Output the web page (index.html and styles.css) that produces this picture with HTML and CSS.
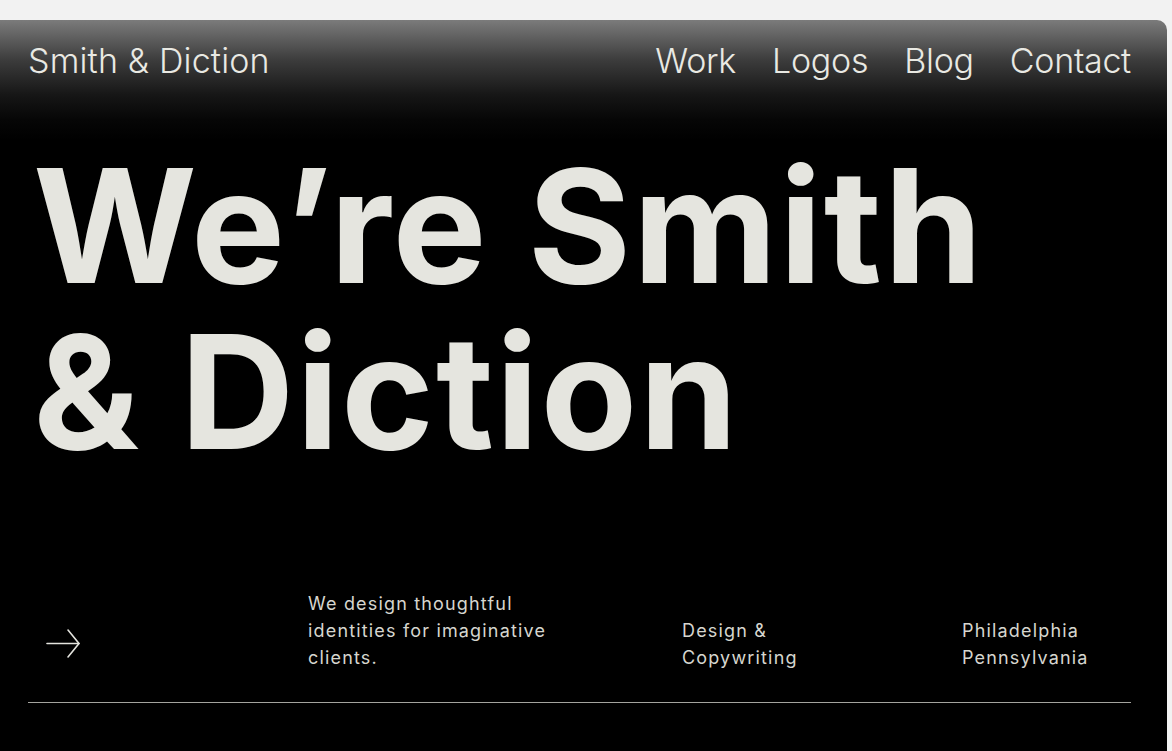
FILE: index.html
```html
<!DOCTYPE html>
<html lang="en">
<head>
<meta charset="utf-8">
<title>Smith &amp; Diction</title>
<link rel="stylesheet" href="styles.css">
</head>
<body>
<div class="frame">
  <header class="nav">
    <a class="brand" href="#">Smith &amp; Diction</a>
    <nav class="links">
      <a href="#">Work</a>
      <a href="#">Logos</a>
      <a href="#">Blog</a>
      <a href="#">Contact</a>
    </nav>
  </header>
  <h1 class="headline">We’re Smith<br>&amp; Diction</h1>
  <section class="info">
    <div class="arrow-cell">
      <svg class="arrow" width="36" height="32" viewBox="0 0 36 32" fill="none" stroke="#e4e4de" stroke-width="1.6" stroke-linecap="round" stroke-linejoin="round">
        <path d="M1 15.5H33"/>
        <path d="M22 2L33 15.5L22 29"/>
      </svg>
    </div>
    <p class="info-text">We design thoughtful<br>identities for imaginative<br>clients.</p>
    <p class="info-text">Design &amp;<br>Copywriting</p>
    <p class="info-text">Philadelphia<br>Pennsylvania</p>
  </section>
  <hr class="rule">
</div>
</body>
</html>
```
FILE: styles.css
```css
html, body {
  margin: 0;
  padding: 0;
}
body {
  background: #f2f2f2;
  font-family: Inter, "Liberation Sans", sans-serif;
  overflow: hidden;
}
.frame {
  margin-top: 20px;
  width: 1167px;
  height: 731px;
  box-sizing: border-box;
  padding: 0 36px 0 28px;
  border-top-right-radius: 10px;
  background: linear-gradient(to bottom, #7b7b7b 0px, #3c3c3c 40px, #161616 75px, #060606 100px, #000 120px);
  display: flex;
  flex-direction: column;
}
.nav {
  display: flex;
  justify-content: space-between;
  align-items: baseline;
  padding-top: 21px;
}
.nav a {
  color: #e9e9e3;
  text-decoration: none;
  font-weight: 300;
  font-size: 34px;
  line-height: 40px;
  letter-spacing: 0.005em;
}
.links {
  display: flex;
  gap: 36px;
}
.links a {
  letter-spacing: -0.008em;
}
.headline {
  margin: 62px 0 0 5px;
  color: #e5e5df;
  font-weight: 700;
  font-size: 158px;
  line-height: 166px;
  letter-spacing: 0.012em;
}
.info {
  display: grid;
  grid-template-columns: 280px 374px 280px 1fr;
  align-items: end;
  margin-top: 115px;
}
.arrow-cell {
  padding-left: 18px;
  display: flex;
  padding-bottom: 11px;
}
.info-text {
  margin: 0;
  color: #d6d6cf;
  font-size: 18px;
  line-height: 27px;
  letter-spacing: 0.065em;
  font-weight: 400;
}
.rule {
  margin: 31px 0 0;
  border: 0;
  height: 1px;
  background: #a4a49e;
}
```
